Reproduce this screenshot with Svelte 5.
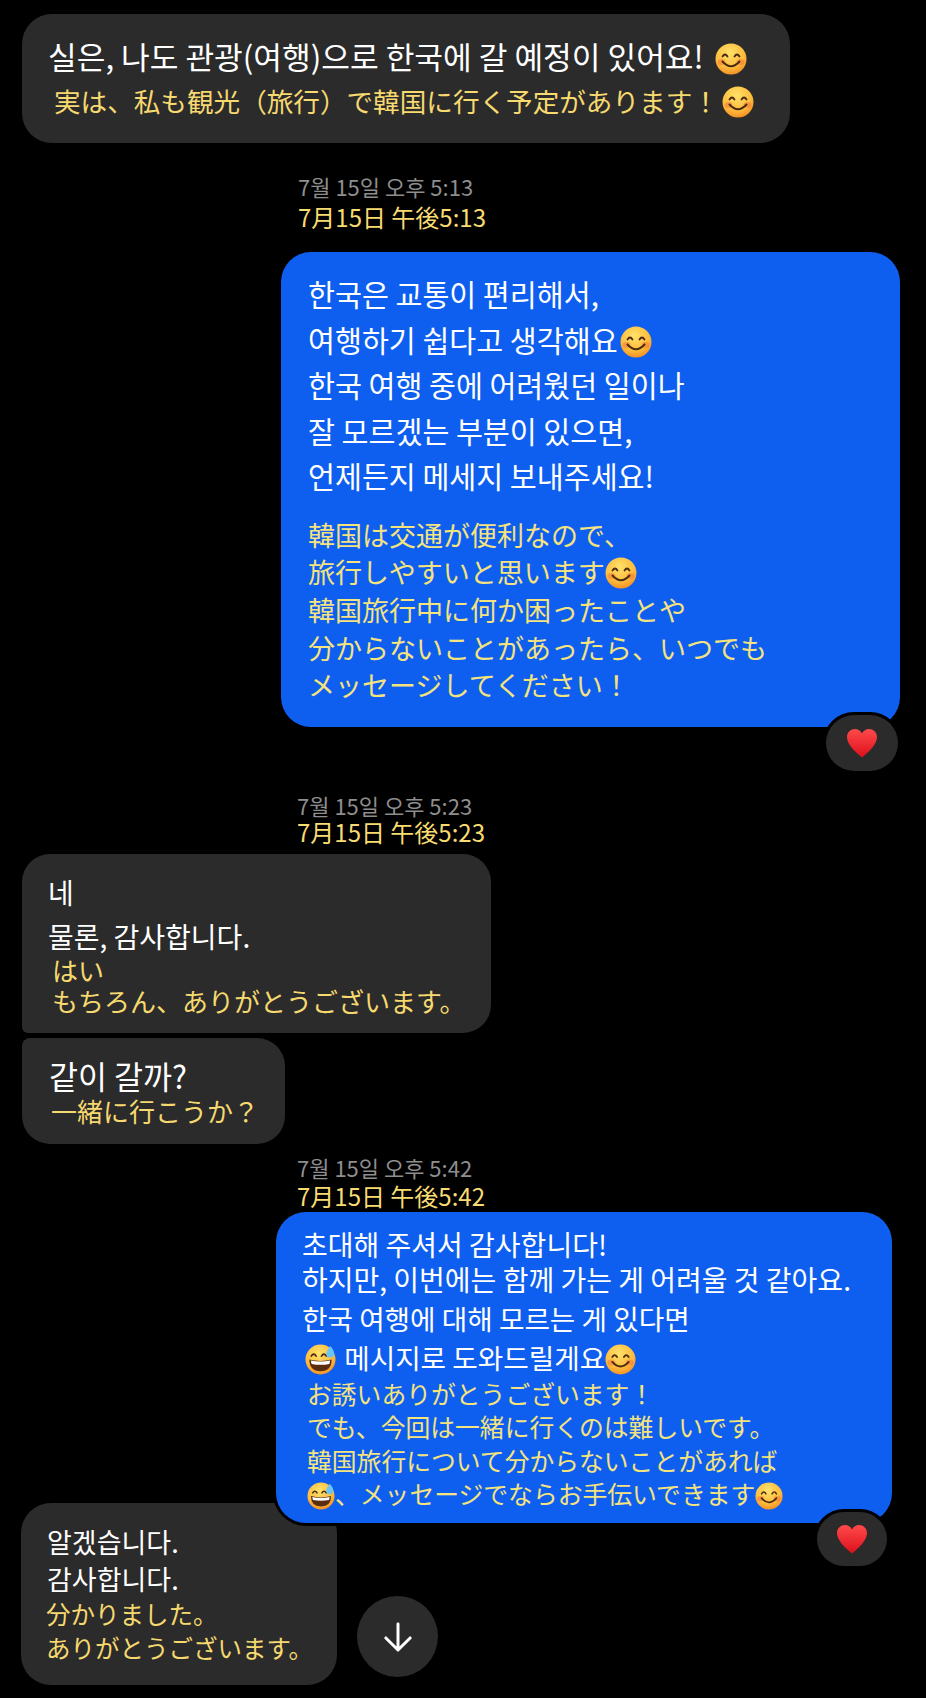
<script>
  const first = {
    ko: "실은, 나도 관광(여행)으로 한국에 갈 예정이 있어요!",
    ja: "実は、私も観光（旅行）で韓国に行く予定があります！"
  };
</script>

{#snippet smile()}
  <svg class="emoji" viewBox="0 0 32 32">
    <defs>
      <radialGradient id="face" cx="0.45" cy="0.3" r="0.8">
        <stop offset="0" stop-color="#ffe26a" />
        <stop offset="0.6" stop-color="#fdbb3c" />
        <stop offset="1" stop-color="#f27f1c" />
      </radialGradient>
    </defs>
    <circle cx="16" cy="16" r="15.5" fill="url(#face)" />
    <ellipse cx="6.500" cy="19" rx="4" ry="3" fill="#f4693a" opacity="0.45" />
    <ellipse cx="25.500" cy="19" rx="4" ry="3" fill="#f4693a" opacity="0.45" />
    <path d="M7.500 13.500q2.500-4 5 0M19.500 13.500q2.500-4 5 0" fill="none" stroke="#4a2c12" stroke-width="1.8" stroke-linecap="round" />
    <path d="M7.500 18.500q8.500 9.500 17 0" fill="none" stroke="#4a2c12" stroke-width="2" stroke-linecap="round" />
  </svg>
{/snippet}

{#snippet sweat()}
  <svg class="emoji sweat" viewBox="0 0 32 32">
    <circle cx="16" cy="16" r="15.500" fill="url(#face)" />
    <path d="M6.500 12.500q2.500-4 5 0M17 12.500q2.500-4 5 0" fill="none" stroke="#4a2c12" stroke-width="1.800" stroke-linecap="round" />
    <path d="M4.500 16q11.500 3 23 0q0 12-11.500 12t-11.500-12z" fill="#5a2c10" />
    <path d="M6 17q10 2.200 20 0l-.8 3.600q-9.200 1.800-18.400 0z" fill="#fff" />
    <path d="M26 2q4.500 5 4 8a4 4 0 0 1-8 0q0-3 4-8z" fill="#6cc4f2" />
  </svg>
{/snippet}

{#snippet heart()}
  <svg class="heart" viewBox="0 0 32 30">
    <defs>
      <linearGradient id="red" x1="0" y1="0" x2="0" y2="1">
        <stop offset="0" stop-color="#ff4a4a" />
        <stop offset="1" stop-color="#dc0f1c" />
      </linearGradient>
    </defs>
    <path d="M16 29.500C8 23 1 16 1 9C1 4 5 1 9 1c3 0 5.500 1.500 7 4.500C17.500 2.500 20 1 23 1c4 0 8 3 8 8c0 7-7 14-15 20.500z" fill="url(#red)" />
  </svg>
{/snippet}

<main class="chat">
  <section class="bubble dark b1">
    <p class="ko ko1">{first.ko} {@render smile()}</p>
    <p class="ja ja1">{first.ja}{@render smile()}</p>
  </section>

  <div class="stamp s1">
    <p class="stamp-ko">7월 15일 오후 5:13</p>
    <p class="stamp-ja">7月15日 午後5:13</p>
  </div>

  <section class="bubble blue b2">
    <div class="ko-block">
      <p class="ko">한국은 교통이 편리해서,</p>
      <p class="ko">여행하기 쉽다고 생각해요{@render smile()}</p>
      <p class="ko">한국 여행 중에 어려웠던 일이나</p>
      <p class="ko">잘 모르겠는 부분이 있으면,</p>
      <p class="ko">언제든지 메세지 보내주세요!</p>
    </div>
    <div class="ja-block">
      <p class="ja">韓国は交通が便利なので、</p>
      <p class="ja">旅行しやすいと思います{@render smile()}</p>
      <p class="ja">韓国旅行中に何か困ったことや</p>
      <p class="ja">分からないことがあったら、いつでも</p>
      <p class="ja">メッセージしてください！</p>
    </div>
    <div class="reaction">{@render heart()}</div>
  </section>

  <div class="stamp s2">
    <p class="stamp-ko">7월 15일 오후 5:23</p>
    <p class="stamp-ja">7月15日 午後5:23</p>
  </div>

  <section class="bubble dark b3">
    <p class="ko">네</p>
    <p class="ko">물론, 감사합니다.</p>
    <p class="ja ja-first">はい</p>
    <p class="ja">もちろん、ありがとうございます。</p>
  </section>

  <section class="bubble dark b4">
    <p class="ko">같이 갈까?</p>
    <p class="ja">一緒に行こうか？</p>
  </section>

  <div class="stamp s3">
    <p class="stamp-ko">7월 15일 오후 5:42</p>
    <p class="stamp-ja">7月15日 午後5:42</p>
  </div>

  <section class="bubble blue b5">
    <p class="ko">초대해 주셔서 감사합니다!</p>
    <p class="ko">하지만, 이번에는 함께 가는 게 어려울 것 같아요.</p>
    <p class="ko tall">한국 여행에 대해 모르는 게 있다면</p>
    <p class="ko tall">{@render sweat()} 메시지로 도와드릴게요{@render smile()}</p>
    <p class="ja">お誘いありがとうございます！</p>
    <p class="ja">でも、今回は一緒に行くのは難しいです。</p>
    <p class="ja">韓国旅行について分からないことがあれば</p>
    <p class="ja">{@render sweat()}、メッセージでならお手伝いできます{@render smile()}</p>
    <div class="reaction">{@render heart()}</div>
  </section>

  <div class="last-row">
    <section class="bubble dark b6">
      <p class="ko">알겠습니다.</p>
      <p class="ko">감사합니다.</p>
      <p class="ja">分かりました。</p>
      <p class="ja">ありがとうございます。</p>
    </section>
    <button class="down" aria-label="Scroll to latest">
      <svg viewBox="0 0 30 32" width="28" height="30">
        <path d="M15 2v28M2 17L15 30L28 17" fill="none" stroke="#fff" stroke-width="3.200" stroke-linecap="round" stroke-linejoin="round" />
      </svg>
    </button>
  </div>
</main>

<style>
  :global(body) {
    background: #000;
  }

  p {
    margin: 0;
    white-space: nowrap;
  }

  .chat {
    width: 926px;
    height: 1698px;
    padding-top: 14px;
    box-sizing: border-box;
    background: #000;
    overflow: hidden;
  }

  .bubble {
    position: relative;
    box-sizing: border-box;
    border-radius: 30px;
  }

  .dark {
    background: #2b2b2b;
  }

  .blue {
    background: #0e5ff0;
  }

  .ko {
    color: #fff;
    font-family: "Noto Sans CJK KR", sans-serif;
  }

  .ja {
    color: #f6d96f;
    font-family: "Noto Sans CJK JP", sans-serif;
  }

  .blue .ja {
    color: #f4e37e;
  }

  .emoji {
    display: inline-block;
    width: 32px;
    height: 32px;
    vertical-align: -6px;
  }

  .heart {
    width: 32px;
    height: 30px;
  }

  .b1 {
    width: 768px;
    height: 129px;
    margin-left: 22px;
    padding: 20px 0 0 26px;
  }

  .ko1 {
    font-size: 31.200px;
    line-height: 44px;
  }

  .ko1 .emoji {
    margin-left: 4px;
  }

  .ja1 {
    font-size: 26.600px;
    line-height: 45px;
    margin-left: 6px;
  }

  .ja1 .emoji {
    margin-left: 3px;
  }

  .stamp {
    width: fit-content;
  }

  .stamp-ko {
    color: #8e8e8e;
    font-family: "Noto Sans CJK KR", sans-serif;
    font-size: 22px;
    line-height: 30px;
  }

  .stamp-ja {
    color: #f8dc72;
    font-family: "Noto Sans CJK JP", sans-serif;
    font-size: 24px;
    line-height: 32px;
  }

  .s1 {
    margin: 28px 0 0 298px;
  }

  .s3 .stamp-ja {
    line-height: 28px;
  }

  .b2 {
    width: 619px;
    height: 475px;
    margin: 19px 0 0 281px;
    padding: 19px 0 0 27px;
  }

  .b2 .ko {
    font-size: 29.300px;
    line-height: 45.500px;
  }

  .b2 .ko .emoji {
    margin-left: 2px;
  }

  .ja-block {
    margin-top: 17px;
  }

  .b2 .ja {
    font-size: 27px;
    line-height: 37.700px;
  }

  .reaction {
    position: absolute;
    display: flex;
    align-items: center;
    justify-content: center;
    width: 72px;
    height: 56px;
    border-radius: 28px;
    background: #2b2b2b;
    box-shadow: 0 0 0 3px #000;
  }

  .b2 .reaction {
    right: 2px;
    bottom: -44px;
  }

  .s2 {
    margin: 63px 0 0 297px;
  }

  .s2 .stamp-ja {
    line-height: 24px;
  }

  .b3 {
    width: 469px;
    height: 179px;
    margin: 10px 0 0 22px;
    padding: 16px 0 0 26px;
    border-radius: 28px 28px 28px 6px;
  }

  .b3 .ko {
    font-size: 28px;
    line-height: 44px;
  }

  .b3 .ja {
    font-size: 26px;
    line-height: 30.500px;
    margin-left: 4px;
  }

  .b3 .ja-first {
    margin-top: -3px;
  }

  .b4 {
    width: 263px;
    height: 106px;
    margin: 5px 0 0 22px;
    padding: 17px 0 0 27px;
    border-radius: 8px 28px 28px 28px;
  }

  .b4 .ko {
    font-size: 31.500px;
    line-height: 40px;
  }

  .b4 .ja {
    font-size: 26px;
    line-height: 32px;
    margin-left: 2px;
  }

  .s3 {
    margin: 8px 0 0 297px;
  }

  .b5 {
    z-index: 1;
    width: 616px;
    height: 311px;
    margin: 2px 0 0 276px;
    padding: 15px 0 0 26px;
    box-shadow: 0 0 0 3px #000;
  }

  .b5 .ko {
    font-size: 28px;
    line-height: 34.500px;
  }

  .b5 .ko.tall {
    font-size: 27.700px;
    line-height: 39px;
  }

  .b5 .ko.tall:nth-child(3) {
    margin-top: 3px;
  }

  .b5 .ja {
    font-size: 24.800px;
    line-height: 33.300px;
    margin-left: 5px;
  }

  .b5 .ja .emoji {
    width: 28px;
    height: 28px;
  }

  .b5 .ko .emoji {
    width: 31px;
    height: 31px;
  }

  .b5 .ko .sweat {
    margin: 0 2px 0 3px;
  }

  .b5 .reaction {
    right: 5px;
    bottom: -43px;
    width: 70px;
    height: 54px;
  }

  .last-row {
    display: flex;
    align-items: flex-end;
    gap: 20px;
    margin: -20px 0 0 21px;
  }

  .b6 {
    width: 316px;
    height: 182px;
    padding: 19.500px 0 0 26px;
  }

  .b6 .ko {
    font-size: 27px;
    line-height: 37px;
  }

  .b6 .ja {
    font-size: 24.500px;
    line-height: 34px;
    margin-left: -1px;
  }

  .down {
    display: flex;
    align-items: center;
    justify-content: center;
    width: 81px;
    height: 81px;
    margin-bottom: 8px;
    padding: 0;
    border: 0;
    border-radius: 50%;
    background: #2b2b2b;
  }
</style>
